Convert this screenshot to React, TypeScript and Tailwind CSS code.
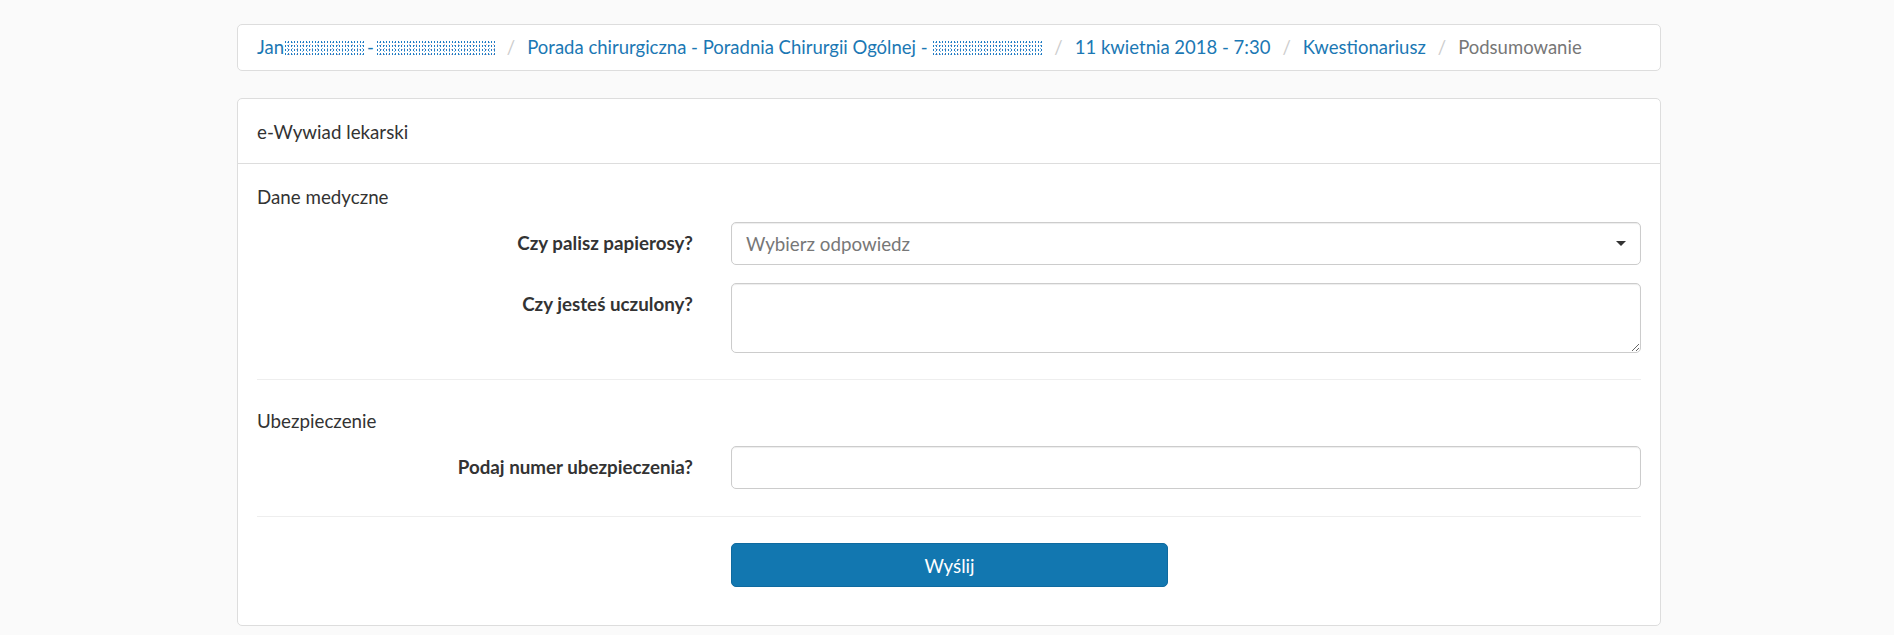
import React from "react";

function Blur({ w }: { w: number }) {
  return (
    <span
      className="inline-block h-[17px] align-[-3px] bg-[image:radial-gradient(#1f7cc4_0.8px,transparent_1px),radial-gradient(#7fb3dd_0.8px,transparent_1px),radial-gradient(#e3b6c4_0.7px,transparent_0.9px)] bg-[length:3px_4px,5px_3px,7px_5px] bg-[position:0_0,1px_1px,2px_2px]"
      style={{ width: w }}
    />
  );
}

function Sep() {
  return <span className="mx-[12px] text-[#ccc]">/</span>;
}

export default function App() {
  return (
    <div className="min-h-[635px] bg-[#fafafa] pt-[24px] font-['Lato',sans-serif] text-[18.75px] leading-[27px] text-[#333]">
      <div className="ml-[237px] w-[1424px]">
        <nav className="flex h-[47px] items-center whitespace-nowrap rounded-[5px] border border-[#ddd] bg-white px-[19px] text-[18.5px]">
          <a className="text-[#1b78b4]">
            Jan
            <Blur w={81} />
            <span className="mx-[2px]">-</span>
            <Blur w={119} />
          </a>
          <Sep />
          <a className="text-[#1b78b4]">
            Porada chirurgiczna - Poradnia Chirurgii Ogólnej - <Blur w={110} />
          </a>
          <Sep />
          <a className="text-[#1b78b4]">11 kwietnia 2018 - 7:30</a>
          <Sep />
          <a className="text-[#1b78b4]">Kwestionariusz</a>
          <Sep />
          <span className="text-[#777]">Podsumowanie</span>
        </nav>

        <div className="mt-[27px] rounded-[5px] border border-[#ddd] bg-white">
          <div className="flex h-[65px] items-center border-b border-[#ddd] px-[19px]">
            e-Wywiad lekarski
          </div>
          <div className="px-[19px] pb-[38px] pt-[19px]">
            <div className="mb-[12px]">Dane medyczne</div>

            <div className="mb-[18px] flex items-start">
              <label className="w-[436px] pt-[7px] text-right font-bold">Czy palisz papierosy?</label>
              <div className="ml-[38px] flex h-[43px] flex-1 items-center justify-between rounded-[5px] border border-[#ccc] bg-white pl-[14px] pr-[14px] text-[#777] shadow-[inset_0_1px_1px_rgba(0,0,0,0.075)]">
                <span>Wybierz odpowiedz</span>
                <span className="h-0 w-0 border-x-[5px] border-t-[5px] border-x-transparent border-t-[#333]" />
              </div>
            </div>

            <div className="flex items-start">
              <label className="w-[436px] pt-[7px] text-right font-bold">Czy jesteś uczulony?</label>
              <div className="ml-[38px] flex-1">
                <textarea className="block h-[70px] w-full rounded-[5px] border border-[#ccc] bg-white shadow-[inset_0_1px_1px_rgba(0,0,0,0.075)] outline-none" />
              </div>
            </div>

            <div className="mt-[26px] h-px bg-[#eee]" />

            <div className="mb-[12px] mt-[27px]">Ubezpieczenie</div>

            <div className="flex items-start">
              <label className="w-[436px] pt-[7px] text-right font-bold">Podaj numer ubezpieczenia?</label>
              <div className="ml-[38px] flex-1">
                <input className="block h-[43px] w-full rounded-[5px] border border-[#ccc] bg-white shadow-[inset_0_1px_1px_rgba(0,0,0,0.075)] outline-none" />
              </div>
            </div>

            <div className="mt-[27px] h-px bg-[#eee]" />

            <div className="mt-[26px] flex">
              <div className="ml-[474px]">
                <button className="flex h-[44px] w-[437px] items-center justify-center rounded-[5px] border border-[#0f6a9f] bg-[#1277b0] text-white">
                  Wyślij
                </button>
              </div>
            </div>
          </div>
        </div>
      </div>
    </div>
  );
}
